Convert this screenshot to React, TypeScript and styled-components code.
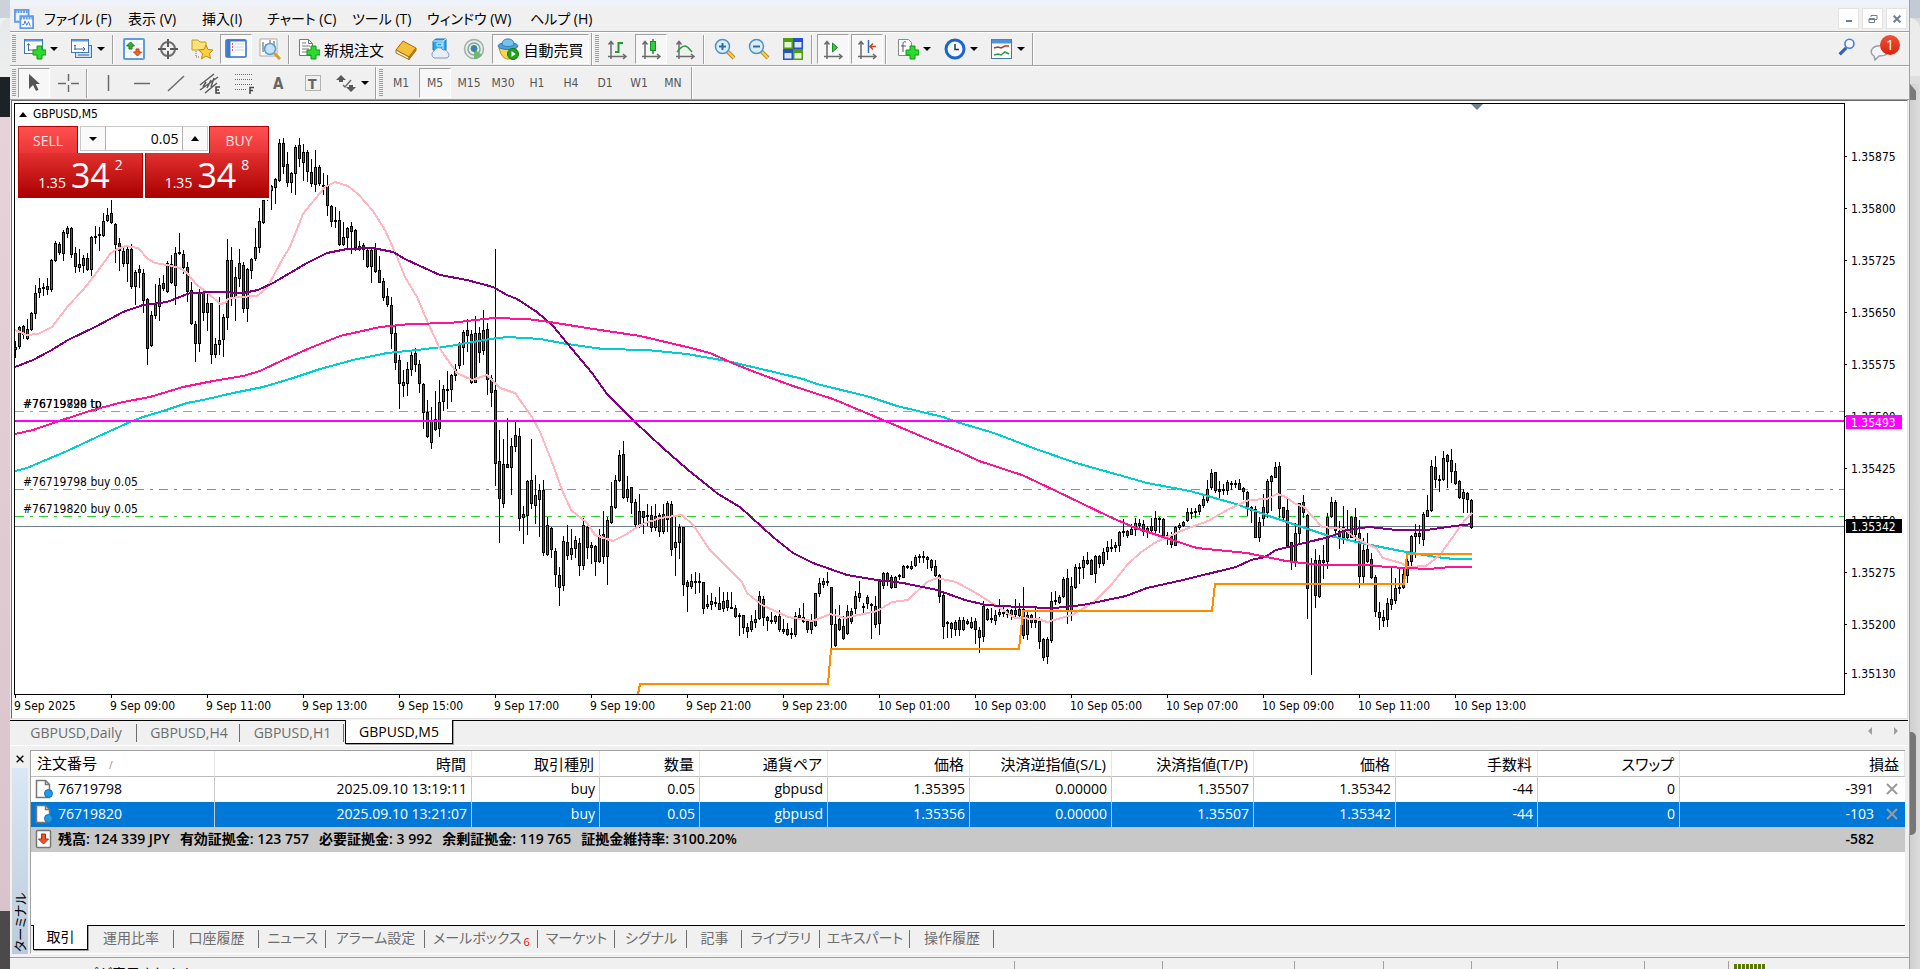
import React from "react";
import styled, { createGlobalStyle, css } from "styled-components";

const UI_FONT = '"Open Sans", "Noto Sans CJK JP", sans-serif';
const CHART_FONT = '"DejaVu Sans Condensed", "Noto Sans", sans-serif';

const GlobalStyle = createGlobalStyle`
  * { box-sizing: border-box; }
  html, body, #root { margin: 0; height: 100%; }
  body {
    overflow: hidden;
    background: #f0f0f0;
    color: #000;
    font-family: ${UI_FONT};
    font-size: 14px;
    font-feature-settings: "palt";
  }
  button, input { font: inherit; font-feature-settings: inherit; color: inherit; margin: 0; }
  button { padding: 0; border: 0; background: none; }
`;

/* ---------- desktop and window frame ---------- */

const Desktop = styled.div`
  display: flex;
  height: 100vh;
`;

const LeftBackdrop = styled.div`
  flex: 0 0 10px;
  display: flex;
  flex-direction: column;
`;

const RightBackdrop = styled.div`
  flex: 0 0 10px;
  display: flex;
  flex-direction: column;
  background: linear-gradient(90deg, #cfcfcf, #dcdcdc);
`;

const Patch = styled.div<{ $h?: number; $bg: string; $radius?: string }>`
  flex: ${(p) => (p.$h ? `0 0 ${p.$h}px` : "1 1 auto")};
  background: ${(p) => p.$bg};
  border-radius: ${(p) => p.$radius ?? "0"};
`;

const Thumb = styled.div`
  width: 6px;
  height: 103px;
  background: #767676;
  border-radius: 0 5px 5px 0;
`;

const ScrollUp = styled.div`
  width: 0;
  height: 16px;
  border-left: 6px solid #7a7a7a;
  border-top: 7px solid transparent;
`;

const Window = styled.main`
  flex: 1 1 auto;
  min-width: 0;
  display: flex;
  flex-direction: column;
  background: #f0f0f0;
  border-right: 1px solid #a0a0a0;
`;

const TitleStrip = styled.div`
  flex: 0 0 6px;
  background: #eef3fb;
`;

/* ---------- menu ---------- */

const MenuBar = styled.nav`
  flex: 0 0 26px;
  display: flex;
  align-items: center;
  padding: 0 2px 0 4px;
  border-bottom: 1px solid #a0a0a0;
`;

const MenuButton = styled.button<{ $w: number }>`
  width: ${(p) => p.$w}px;
  padding-left: 10px;
  text-align: left;
  line-height: 20px;
  white-space: nowrap;
`;

const WindowButtons = styled.div`
  display: flex;
  gap: 3px;
  margin-left: auto;
`;

const WindowButton = styled.button`
  display: grid;
  place-items: center;
  width: 21px;
  height: 21px;
  background: #fff;
  border: 1px solid #e3e3e3;
`;

/* ---------- toolbars ---------- */

const Toolbar = styled.div`
  flex: 0 0 34px;
  display: flex;
  align-items: center;
  gap: 2px;
  padding: 0 2px;
  border-top: 1px solid #fff;
  border-bottom: 1px solid #a0a0a0;
`;

const Grip = styled.span`
  flex: 0 0 4px;
  height: 28px;
  background: repeating-linear-gradient(#9c9c9c 0 1px, #f0f0f0 1px 2px);
`;

const Separator = styled.span`
  flex: 0 0 2px;
  height: 29px;
  margin-right: 2px;
  border-left: 1px solid #a0a0a0;
  border-right: 1px solid #fff;
`;

const BarEnd = styled.span`
  flex: 0 0 2px;
  align-self: stretch;
  border-left: 1px solid #a0a0a0;
  border-right: 1px solid #fff;
`;

const ToolButton = styled.button<{ $w?: number; $pressed?: boolean }>`
  flex: 0 0 ${(p) => p.$w ?? 32}px;
  height: 30px;
  display: flex;
  align-items: center;
  justify-content: center;
  gap: 4px;
  border: 1px solid transparent;
  white-space: nowrap;
  font-size: 15px;
  ${(p) =>
    p.$pressed &&
    css`
      background: #f7f7f7;
      border-color: #a0a0a0 #fff #fff #a0a0a0;
    `}
`;

const TimeframeButton = styled(ToolButton)`
  color: #555;
  font-family: "DejaVu Sans Condensed", sans-serif;
  font-size: 12px;
`;

const CaretMark = styled.span`
  border: 4px solid transparent;
  border-top-color: #000;
  border-bottom: 0;
`;

const RightTools = styled.div`
  display: flex;
  align-items: center;
  margin-left: auto;
  gap: 14px;
  padding-right: 7px;
`;

const ChatButton = styled.button`
  position: relative;
  display: flex;
  align-items: flex-end;
  width: 30px;
  height: 30px;
  padding-bottom: 3px;
`;

const Badge = styled.span`
  position: absolute;
  right: 0;
  top: 1px;
  width: 20px;
  height: 20px;
  border-radius: 50%;
  background: linear-gradient(#ee5238, #d8230c);
  color: #fff;
  font-size: 14px;
  line-height: 20px;
  text-align: center;
`;

/* ---------- chart ---------- */

const ChartFrame = styled.section`
  flex: 1 1 auto;
  min-height: 0;
  display: flex;
  flex-direction: column;
  margin: 0 1px;
  padding: 2px 0 0 2px;
  background: #fff;
  border: 1px solid #e3e3e3;
  border-left-color: #696969;
  border-top-color: #696969;
`;

const ChartBody = styled.div`
  flex: 1 1 auto;
  min-height: 0;
  display: flex;
`;

const Plot = styled.div`
  position: relative;
  flex: 1 1 auto;
  min-width: 0;
  border: 1px solid #000;
  overflow: hidden;
`;

const PlotSvg = styled.svg`
  position: absolute;
  inset: 0;
  width: 100%;
  height: 100%;
  display: block;
`;

const AxisSvg = styled.svg`
  flex: 0 0 62px;
  display: block;
  overflow: hidden;
`;

const TimeAxisSvg = styled.svg`
  flex: 0 0 23px;
  width: 100%;
  display: block;
`;

const ChartTitle = styled.div`
  position: absolute;
  left: 4px;
  top: 2px;
  display: flex;
  align-items: center;
  gap: 6px;
  font-family: ${CHART_FONT};
  font-size: 12px;
  line-height: 16px;
`;

const CollapseMark = styled.span`
  border: 4px solid transparent;
  border-bottom: 5px solid #000;
  border-top: 0;
`;

const TradePanel = styled.div`
  position: absolute;
  left: 2px;
  top: 21px;
  display: grid;
  grid-template-columns: 125px 124px;
  gap: 0 2px;
  padding: 1px 2px 2px 1px;
  background: #fff;
`;

const TradeTop = styled.div`
  grid-column: 1 / -1;
  display: flex;
  justify-content: space-between;
  height: 27px;
`;

const SideButton = styled.button`
  width: 60px;
  background: linear-gradient(#fe5050, #ea3636);
  border: 1px solid #b40000;
  border-bottom: 0;
  color: #ffe1e1;
  font-size: 14px;
  line-height: 25px;
`;

const Stepper = styled.div`
  display: flex;
  height: 25px;
  border: 1px solid #c8c8c8;
`;

const StepButton = styled.button`
  width: 24px;
  display: grid;
  place-items: center;
  background: #fafafa;
`;

const VolumeInput = styled.input`
  width: 78px;
  padding: 0 3px;
  border: 1px solid #b0b0b0;
  border-width: 0 1px;
  background: #fff;
  text-align: right;
  font-size: 14px;
  outline: 0;
`;

const QuoteButton = styled.button`
  height: 45px;
  display: flex;
  justify-content: center;
  align-items: flex-end;
  gap: 5px;
  padding-bottom: 5px;
  background: linear-gradient(#e23030, #ab0000);
  border: 1px solid #b40000;
  color: #fff;
  border-top: 0;
`;

const Small = styled.span`
  font-size: 14px;
  line-height: 18px;
`;
const Large = styled.span`
  font-size: 34px;
  line-height: 34px;
`;
const Pip = styled.span`
  align-self: flex-start;
  font-size: 14px;
  line-height: 24px;
`;

/* ---------- chart tabs ---------- */

const ChartTabs = styled.nav`
  flex: 0 0 26px;
  margin-right: 1px;
  display: flex;
  border-top: 1px solid #000;
  border-bottom: 1px solid #fff;
  margin-top: 1px;
  padding-left: 5px;
`;

const ChartTab = styled.button<{ $w: number; $active?: boolean }>`
  width: ${(p) => p.$w}px;
  color: #6d6d6d;
  border-right: 1px solid transparent;
  background: linear-gradient(#6d6d6d, #6d6d6d) right 3px / 1px 18px no-repeat;
  line-height: 22px;
  ${(p) =>
    p.$active &&
    css`
      height: 24px;
      margin-top: -1px;
      color: #000;
      background: #fff;
      border: 1px solid #000;
      border-top: 0;
      box-shadow: 1px 1px 0 #a0a0a0;
    `}
`;

const TabArrows = styled.div`
  margin-left: auto;
  display: flex;
  gap: 14px;
  padding: 5px 8px 0 0;
  align-items: flex-start;
`;

/* ---------- terminal ---------- */

const Terminal = styled.section`
  flex: 0 0 208px;
  display: flex;
  padding: 4px 4px 0 0;
`;

const TerminalSide = styled.aside`
  flex: 0 0 20px;
  display: flex;
  flex-direction: column;
  align-items: center;
`;

const CloseTerminal = styled.button`
  height: 18px;
  width: 20px;
  display: grid;
  place-items: center;
`;

const SideTitle = styled.div`
  flex: 1 1 auto;
  width: 16px;
  background: linear-gradient(#bccbdb, #dae7f4);
  writing-mode: vertical-rl;
  text-orientation: sideways;
  transform: rotate(180deg);
  font-size: 13px;
  line-height: 16px;
  padding-top: 2px;
`;

const TerminalBody = styled.div`
  flex: 1 1 auto;
  min-width: 0;
  display: flex;
  flex-direction: column;
  border-left: 1px solid #a0a0a0;
  border-top: 1px solid #a0a0a0;
  border-bottom: 1px solid #fff;
`;

const Sheet = styled.div`
  flex: 1 1 auto;
  background: #fff;
  border-bottom: 1px solid #000;
`;

const OrdersTable = styled.table`
  width: 100%;
  border-collapse: separate;
  border-spacing: 0;
  table-layout: fixed;
`;

const HeadCell = styled.th<{ $left?: boolean }>`
  height: 26px;
  padding: 0 ${(p) => (p.$left ? 6 : 5)}px;
  border-right: 1px solid #e5e5e5;
  border-bottom: 1px solid #bdbdbd;
  font-size: 15px;
  font-weight: 400;
  line-height: 20px;
  text-align: ${(p) => (p.$left ? "left" : "right")};
  white-space: nowrap;
`;

const SortMark = styled.span`
  margin-left: 12px;
  color: #888;
  font-size: 10px;
`;

const Row = styled.tr<{ $selected?: boolean }>`
  ${(p) =>
    p.$selected &&
    css`
      background: #0078d7;
      color: #fff;
    `}
`;

const Cell = styled.td`
  height: 25px;
  padding: 0 4px 1px 3px;
  border-right: 1px solid #c8c8c8;
  line-height: 20px;
  text-align: right;
  white-space: nowrap;
  &:last-child {
    padding-right: 5px;
    border-right: 0;
  }
`;

const CellInner = styled.span<{ $end?: boolean }>`
  display: flex;
  align-items: center;
  justify-content: ${(p) => (p.$end ? "flex-end" : "flex-start")};
  gap: ${(p) => (p.$end ? 10 : 4)}px;
`;

const RowClose = styled.button`
  width: 16px;
  height: 16px;
  display: grid;
  place-items: center;
`;

const SummaryCell = styled.td<{ $right?: boolean }>`
  height: 25px;
  padding: 0 ${(p) => (p.$right ? 31 : 4)}px 1px 3px;
  background: #c8c8c8;
  line-height: 20px;
  font-weight: 600;
  text-align: ${(p) => (p.$right ? "right" : "left")};
  white-space: nowrap;
`;

const Figures = styled.span`
  margin-right: 6px;
`;

const TerminalTabs = styled.nav`
  flex: 0 0 27px;
  display: flex;
  align-items: flex-start;
  padding-left: 2px;
`;

const TerminalTab = styled.button<{ $w: number; $active?: boolean }>`
  width: ${(p) => p.$w}px;
  height: 23px;
  color: #6d6d6d;
  line-height: 22px;
  white-space: nowrap;
  background: linear-gradient(#6d6d6d, #6d6d6d) right 4px / 1px 18px no-repeat;
  ${(p) =>
    p.$active &&
    css`
      height: 25px;
      margin-top: -1px;
      color: #000;
      background: #fff;
      border: 1px solid #000;
      border-top: 0;
      box-shadow: 1px 1px 0 #a0a0a0;
    `}
`;

const MailCount = styled.sub`
  color: #f00;
  font-size: 11px;
  line-height: 10px;
  margin-left: 2px;
`;

const StatusBar = styled.footer`
  flex: 0 0 12px;
  display: flex;
  margin-top: 3px;
  padding: 3px 0 0 20px;
  border-top: 1px solid #a0a0a0;
  overflow: hidden;
`;

const StatusText = styled.span`
  flex: 1 1 auto;
  font-size: 14px;
  line-height: 26px;
`;

const StatusField = styled.span<{ $w: number }>`
  flex: 0 0 ${(p) => p.$w}px;
  height: 20px;
  border-left: 1px solid #a0a0a0;
  padding: 3px 0 0 5px;
`;

const Signal = styled.span`
  display: block;
  width: 32px;
  height: 8px;
  background: repeating-linear-gradient(90deg, #5a7a00 0 3px, #f0f0f0 3px 4px);
`;

/* ---------- icons ---------- */

const Icon = ({ children, size = 22 }: { children: React.ReactNode; size?: number }) => (
  <svg width={size} height={size} viewBox="0 0 22 22" fill="none" aria-hidden="true">
    {children}
  </svg>
);

const Plus = () => (
  <path d="M13 8h5v4h4v5h-4v4h-5v-4h-4v-5h4z" fill="#2bdc2b" stroke="#12951a" strokeWidth="1" />
);

const NewChartIcon = () => (
  <Icon>
    <rect x="0.5" y="1.5" width="18" height="14" fill="#fff" stroke="#3f79b0" />
    <path d="M1 2.5h17" stroke="#5b9be0" strokeWidth="2" />
    <path d="M4.500 13V6M3 7.500l1.500-2 1.500 2M4 12h8" stroke="#4a6f98" />
    <Plus />
  </Icon>
);
const ProfilesIcon = () => (
  <Icon>
    <rect x="4.500" y="7.500" width="16" height="12" fill="#cfe2f6" stroke="#3f79b0" />
    <rect x="0.500" y="1.500" width="17" height="13" fill="#fff" stroke="#3f79b0" />
    <path d="M1 2.500h16" stroke="#5b9be0" strokeWidth="2" />
    <path d="M4 7v5M3 11h11M12 9l2 2-2 2M3 8l1-1 1 1M7 17h11" stroke="#3c6899" />
  </Icon>
);
const MarketWatchIcon = () => (
  <Icon>
    <rect x="1" y="1" width="20" height="20" rx="1" fill="#fff" stroke="#5c9fdc" strokeWidth="2" />
    <path d="M2 6h18M2 10h18M2 14h18M8 2v18M14 2v18" stroke="#dbe8f4" />
    <path d="M7.500 4l4 4H9v3H6V8H3.500z" fill="#2fb52f" stroke="#118011" />
    <path d="M14.500 18l-4-4H13v-3h3v3h2.500z" fill="#f0642c" stroke="#c43c10" />
  </Icon>
);
const TargetIcon = () => (
  <Icon>
    <circle cx="11" cy="11" r="7" stroke="#6d6d6d" strokeWidth="2" />
    <path d="M11 1v8M11 13v8M1 11h8M13 11h8" stroke="#5a5a5a" strokeWidth="2" />
  </Icon>
);
const StarIcon = () => (
  <Icon>
    <path d="M1 2h6l2 2h6v8H1z" fill="#fbe27a" stroke="#c29a1a" />
    <path d="M5 13v6h4" stroke="#8a6a10" strokeDasharray="1 1" />
    <path d="M15 7l2 4.500 5 .5-3.500 3.500 1 5-4.500-2.500L10.500 21l1-5L8 12l5-.5z" fill="#fcd03c" stroke="#bf8a10" />
  </Icon>
);
const TerminalIcon = () => (
  <Icon>
    <rect x="1" y="2" width="20" height="17" rx="1" fill="#fff" stroke="#2b6cc0" strokeWidth="1.500" />
    <path d="M3.500 2v17" stroke="#3f79c8" strokeWidth="4" />
    <path d="M2 2.500h18" stroke="#3f79c8" strokeWidth="2" />
    <path d="M7 6h1M7 9h1M7 12h1" stroke="#e02020" strokeWidth="1.500" />
    <path d="M10 6h9M10 9h9M10 12h9" stroke="#c9d3de" />
  </Icon>
);
const TesterIcon = () => (
  <Icon>
    <path d="M1 1h17v17H1z" fill="#fff" stroke="#a9a9a9" />
    <path d="M4 14V4M7 12V6M15 9V3M11 2v4" stroke="#555" />
    <circle cx="11" cy="11" r="5.500" fill="#bfe0fa" fillOpacity="0.9" stroke="#5c9bd4" strokeWidth="1.500" />
    <path d="M15 15l6 6" stroke="#d8a020" strokeWidth="3" />
  </Icon>
);
const NewOrderIcon = () => (
  <Icon>
    <path d="M1.500 1.500h9l4 4v12h-13z" fill="#fff" stroke="#777" />
    <path d="M10.500 1.500v4h4M4 5h4M4 8h8M4 11h7M4 14h5" stroke="#777" />
    <Plus />
  </Icon>
);
const BookIcon = () => (
  <Icon>
    <path d="M1 12L8 3l13 7-7 9z" fill="#f6bf3a" stroke="#a66c0c" />
    <path d="M1 12l13 7v2.500L1 15z" fill="#fff3cf" stroke="#a66c0c" />
    <path d="M14 19l7-9v2.500l-7 9z" fill="#c98413" stroke="#a66c0c" />
  </Icon>
);
const CloudIcon = () => (
  <Icon>
    <path d="M4 3l3-2h10v11H4z" fill="#29a6ee" stroke="#1577b8" />
    <path d="M4 3h10l3-2M8 5h5v3H8zM14 3v9" stroke="#d6f0ff" />
    <path d="M5 20a4 4 0 010-7 5 5 0 019-1 4.500 4.500 0 015 3 3 3 0 01-1 5z" fill="#e8eef7" stroke="#7f96b8" />
  </Icon>
);
const SignalIcon = () => (
  <Icon>
    <circle cx="11" cy="11" r="9.500" fill="#e4ece6" stroke="#a3afa9" strokeWidth="1.500" />
    <circle cx="11" cy="11" r="6" stroke="#8aa5a5" strokeWidth="1.500" />
    <path d="M11 11v10a10 10 0 008-4z" fill="#6fb573" />
    <circle cx="11" cy="10.500" r="3" fill="#3d78d8" stroke="#2f9e44" />
  </Icon>
);
const AutoTradeIcon = () => (
  <Icon>
    <path d="M2 10c2 8 5 11 9 11s7-4 8-11z" fill="#f7d257" stroke="#b8901d" />
    <ellipse cx="11" cy="8" rx="10" ry="3.500" fill="#4aa3dc" stroke="#2c7cb4" />
    <path d="M5 7c0-4 2-6 6-6s6 2 6 6c-3 2-9 2-12 0z" fill="#79c2ec" stroke="#2c7cb4" />
    <circle cx="16" cy="16" r="5.500" fill="#1ea51e" stroke="#0d7a10" />
    <path d="M14.500 13v6l4-3z" fill="#fff" />
  </Icon>
);
const Axes = () => (
  <path d="M5 21V4M2.500 6.500L5 3.500l2.500 3M2 18.500h18M17 16l3 2.500-3 2.500" stroke="#6b6b6b" strokeWidth="1.500" />
);
const BarsIcon = () => (
  <Icon>
    <Axes />
    <path d="M12.500 4v11M9 14h3M13 5h4" stroke="#1f9a2c" strokeWidth="2" />
  </Icon>
);
const CandlesIcon = () => (
  <Icon>
    <Axes />
    <path d="M13 1v15" stroke="#1f8a2c" strokeWidth="1.500" />
    <rect x="10.500" y="3.500" width="5" height="9" fill="#32cf3c" stroke="#1f8a2c" />
  </Icon>
);
const LineIcon = () => (
  <Icon>
    <Axes />
    <path d="M3 14c3-4 5-6 8-6s4 3 7 6" stroke="#2c9a3c" strokeWidth="1.500" />
  </Icon>
);
const Magnifier = ({ minus }: { minus?: boolean }) => (
  <Icon>
    <path d="M13 13l7 7" stroke="#c08a18" strokeWidth="4" />
    <path d="M13 13l7 7" stroke="#f4d056" strokeWidth="2" />
    <circle cx="8.500" cy="8.500" r="7" fill="#d8edfb" stroke="#4d8fc4" strokeWidth="1.500" />
    <path d={minus ? "M5 8.500h7" : "M5 8.500h7M8.500 5v7"} stroke="#2f6ea8" strokeWidth="2" />
  </Icon>
);
const TileIcon = () => (
  <Icon>
    <path d="M1 0h10v11H1zM11 11h10v11H11z" fill="#4f9e12" />
    <path d="M11 0h10v11H11zM1 11h10v11H1z" fill="#2450cc" />
    <path d="M2.500 4h7v5.500h-7zM12.500 15h7v5.500h-7z" fill="#e4f5d6" />
    <path d="M12.500 4h7v5.500h-7zM2.500 15h7v5.500h-7z" fill="#dbe6fc" />
  </Icon>
);
const AutoScrollIcon = () => (
  <Icon>
    <Axes />
    <path d="M10.500 5v9l5-4.500z" fill="#38c838" stroke="#1f8a2c" />
  </Icon>
);
const ShiftIcon = () => (
  <Icon>
    <Axes />
    <path d="M12.500 2v13" stroke="#2f6eb0" strokeWidth="1.500" />
    <path d="M20 8.500h-6M17 5.500l-3 3 3 3" stroke="#c8441a" strokeWidth="1.500" />
  </Icon>
);
const IndicatorsIcon = () => (
  <Icon>
    <path d="M1.500 1.500h10l3 3v13h-13z" fill="#fff" stroke="#888" />
    <path d="M9 4c-3-1-3 1-3 3v7M4 8h5" stroke="#555" />
    <Plus />
  </Icon>
);
const ClockIcon = () => (
  <Icon>
    <circle cx="11" cy="11" r="9" fill="#f4f9ff" stroke="#1a66c8" strokeWidth="3" />
    <path d="M11 6v5.500h4" stroke="#333" strokeWidth="1.500" />
  </Icon>
);
const TemplateIcon = () => (
  <Icon>
    <rect x="0.500" y="1.500" width="20" height="19" fill="#fff" stroke="#3f79b0" />
    <path d="M1 3.500h19" stroke="#4f93de" strokeWidth="4" />
    <path d="M3 10l4-1 3 1 4-2h4" stroke="#b03a1c" strokeWidth="1.500" />
    <path d="M3 17l4-1 3 1 4-3 4 2" stroke="#2c9a3c" strokeWidth="1.500" />
  </Icon>
);
const CursorIcon = () => (
  <Icon>
    <path d="M6 2v15l4-4 3 6 2.500-1.200L12.700 12H17z" fill="#555" />
  </Icon>
);
const CrossIcon = () => (
  <Icon>
    <path d="M11.500 2v7M11.500 13v7M1 11.500h8M14 11.500h8" stroke="#6b6b6b" strokeWidth="1.500" />
  </Icon>
);
const VLineIcon = () => (
  <Icon>
    <path d="M11.500 3v16" stroke="#6b6b6b" strokeWidth="1.500" />
  </Icon>
);
const HLineIcon = () => (
  <Icon>
    <path d="M3 11.500h16" stroke="#6b6b6b" strokeWidth="1.500" />
  </Icon>
);
const TrendIcon = () => (
  <Icon>
    <path d="M3 19L19 4" stroke="#6b6b6b" strokeWidth="1.500" />
  </Icon>
);
const ChannelIcon = () => (
  <Icon>
    <path d="M1 13L15 2M1 18L19 5M6 21L18 11M4 15l3-5M8 16l4-8M12 15l3-9" stroke="#5a5a5a" strokeWidth="1.500" />
    <path d="M21 15h-4v6h4M17 18h3" stroke="#444" strokeWidth="1.500" />
  </Icon>
);
const FiboIcon = () => (
  <Icon>
    <path d="M2 2.500h18M2 7.500h18M2 12.500h18M2 17.500h12" stroke="#6b6b6b" strokeDasharray="1 1" />
    <path d="M21 15.500h-4V22M17 18.500h3" stroke="#444" strokeWidth="1.500" />
  </Icon>
);
const LetterAIcon = () => (
  <Icon>
    <text x="6" y="17" fontFamily="DejaVu Sans Condensed" fontWeight="700" fontSize="15" fill="#666">
      A
    </text>
  </Icon>
);
const LabelIcon = () => (
  <Icon>
    <rect x="4.500" y="3.500" width="15" height="15" stroke="#777" strokeDasharray="1 1" />
    <text x="7" y="17" fontFamily="DejaVu Sans Condensed" fontWeight="700" fontSize="14" fill="#666">
      T
    </text>
  </Icon>
);
const ArrowsIcon = () => (
  <Icon>
    <path d="M6 3l5 5H8v2H4V8H1zM16 20l-5-5h3v-2h4v2h3z" fill="#5a5a5a" />
    <path d="M8 13l2 2 6-7" stroke="#6b6b6b" strokeWidth="1.500" />
  </Icon>
);
const AppIcon = () => (
  <Icon size={20}>
    <path d="M1 1h15v13H1z" fill="#e9f2fc" stroke="#5f9cf0" strokeWidth="2" />
    <path d="M7 8h14v13H7z" fill="#fff" stroke="#5f9cf0" strokeWidth="2" />
    <path d="M1 3h15M7 10h14" stroke="#5f9cf0" strokeWidth="3" strokeDasharray="2 1" />
    <path d="M9 17h2l1-4 2 5 2-4 2 5" stroke="#3d76c8" strokeWidth="1" />
  </Icon>
);
const SearchIcon = () => (
  <Icon size={18}>
    <path d="M2 20l8-8" stroke="#3560c0" strokeWidth="4" />
    <circle cx="14" cy="7" r="5.500" fill="#f6f9ff" stroke="#4a7fd8" strokeWidth="2" />
  </Icon>
);
const ChatIcon = () => (
  <svg width="24" height="18" viewBox="0 0 24 18" fill="none" aria-hidden="true">
    <path d="M4 13c-3-2-4-5-1-8s13-3 15 1-2 7-9 7l-4 4z" fill="#f2f4f7" stroke="#9aa0a8" strokeWidth="1.500" />
  </svg>
);
const OrderIcon = () => (
  <svg width="20" height="20" viewBox="0 0 20 20" fill="none" aria-hidden="true">
    <path d="M2.500 1.500h9l4 4v13h-13z" fill="#fff" stroke="#777" strokeWidth="1.500" />
    <path d="M11.500 1.500v4h4" stroke="#777" strokeWidth="1.500" />
    <circle cx="14.500" cy="14.500" r="4" fill="#1f9be8" stroke="#1273b5" />
  </svg>
);
const BalanceIcon = () => (
  <svg width="20" height="20" viewBox="0 0 20 20" fill="none" aria-hidden="true">
    <rect x="2.500" y="1.500" width="14" height="17" rx="1" fill="#fff" stroke="#777" strokeWidth="1.500" />
    <path d="M7.500 5h4v5h3l-5 5-5-5h3z" fill="#f0532a" stroke="#b02c0c" />
  </svg>
);
const Cross = ({ size, color, width }: { size: number; color: string; width: number }) => (
  <svg width={size} height={size} viewBox="0 0 12 12" aria-hidden="true">
    <path d="M1 1l10 10M11 1L1 11" stroke={color} strokeWidth={width} />
  </svg>
);

/* ---------- chart data ---------- */

// One entry for each five-minute bar: high, body top, body bottom, low, direction.
const BARS = `
341 347 349 357 d|326 327 346 348 u|325 326 334 338 d|319 329 338 339 u|312 313 329 330 u
285 293 313 318 u|278 288 292 297 u|283 287 288 295 d|278 286 289 294 d|259 260 289 291 u
241 243 260 261 u|242 244 252 254 d|230 232 253 260 u|226 228 233 237 u|227 228 254 257 d
247 253 266 272 d|249 264 267 271 u|255 258 265 272 u|253 258 269 270 d|236 237 269 275 u
226 236 237 243 u|227 234 235 250 d|213 221 235 236 u|208 215 220 221 u|200 213 222 223 d
223 224 244 262 d|238 243 250 270 d|247 251 263 266 d|247 249 263 281 u|244 249 286 288 d
270 272 286 304 u|265 269 272 287 d|269 273 300 312 d|298 299 348 364 d|311 315 345 346 u
284 304 315 318 u|278 285 306 320 u|275 283 288 290 d|261 263 291 292 u|255 264 282 283 d
247 253 285 304 u|233 252 253 254 d|250 254 267 273 d|262 267 291 301 d|282 290 323 324 d
321 324 343 361 d|289 292 343 351 u|288 292 312 320 d|294 303 312 330 u|303 303 354 363 d
338 344 354 357 u|297 340 344 354 u|314 317 339 356 u|239 260 317 329 u|247 260 297 305 d
267 277 297 320 u|249 263 278 286 u|262 265 308 312 d|268 269 308 321 u|258 259 270 278 u
228 247 258 260 u|208 221 247 252 u|200 200 222 223 u|188 190 199 200 u|185 186 190 209 u
178 179 187 203 u|139 143 180 181 u|138 143 166 173 d|152 164 182 186 d|172 173 182 192 u
145 147 173 194 u|138 145 158 166 d|144 152 162 180 u|150 152 171 181 d|159 172 183 186 d
150 167 184 191 u|165 167 183 185 d|173 185 186 194 d|175 186 205 215 d|205 206 221 226 d
207 220 221 227 d|211 220 244 245 d|222 237 244 245 u|227 228 237 247 u|222 226 231 253 d
229 230 247 250 d|241 246 249 250 d|243 245 249 259 d|249 250 266 267 d|248 250 266 282 u
243 249 271 272 d|256 270 282 282 d|278 281 297 300 d|288 296 304 306 d|297 305 333 348 d
324 333 362 369 d|355 360 383 408 d|370 382 385 396 u|362 369 383 395 u|350 355 369 375 u
348 353 364 371 d|360 364 383 392 d|383 384 412 428 d|400 412 436 437 d|407 421 442 448 u
391 419 429 430 d|380 402 428 436 u|385 389 401 410 u|371 389 390 408 d|374 375 389 401 u
364 369 375 380 u|342 344 365 368 u|330 332 347 364 u|319 330 335 351 d|330 334 382 383 d
316 333 382 382 u|327 333 352 362 d|310 330 350 354 u|323 329 379 394 d|375 378 392 406 d
249 390 463 485 d|430 461 498 542 d|439 464 503 507 u|418 464 467 467 d|438 446 467 494 u
422 435 446 451 u|428 436 518 530 d|506 514 517 543 u|480 481 515 534 u|439 480 503 508 d
475 495 505 523 u|484 490 499 536 u|480 490 552 555 d|517 525 554 555 u|527 528 549 557 d
548 551 574 586 d|567 575 587 605 d|536 541 585 590 u|525 542 555 559 d|529 548 554 559 u
536 540 548 557 u|538 543 565 575 d|518 525 565 569 u|525 527 547 558 d|542 545 547 563 u
545 546 561 575 d|529 535 561 562 u|511 534 556 563 d|517 520 556 584 u|482 506 522 523 u
475 480 507 508 u|450 455 480 481 u|441 454 497 498 d|476 489 497 501 u|487 487 502 513 d
499 502 524 527 d|494 511 524 527 u|511 511 517 533 d|504 515 516 525 d|506 515 527 531 d
504 516 527 530 u|513 515 531 536 d|504 514 531 533 u|501 503 519 531 u|501 504 549 555 d
517 542 547 575 u|524 527 542 558 u|527 527 584 595 d|580 582 586 611 d|574 581 586 588 u
572 581 582 593 u|573 581 582 592 d|582 582 608 613 d|595 604 606 608 u|593 601 604 609 u
597 602 603 606 d|587 603 609 609 d|592 601 608 611 u|592 600 607 610 d|592 607 608 608 d
605 608 616 617 d|613 615 616 635 u|615 615 627 633 d|623 627 631 637 d|615 621 629 631 u
610 619 622 627 u|591 596 618 619 u|596 599 617 625 d|616 617 620 630 d|612 620 621 623 u
615 616 621 623 u|610 616 629 631 d|619 629 631 633 d|623 629 634 635 d|628 633 634 638 d
612 616 634 636 u|608 615 617 618 d|603 617 621 622 d|620 621 629 632 d|614 622 629 633 u
593 593 625 626 u|578 583 593 596 u|578 581 584 587 u|572 581 582 585 u|587 587 624 648 d
609 624 645 646 d|605 619 629 630 d|616 626 638 639 d|605 611 633 634 u|608 611 621 623 d
591 596 608 613 u|581 593 597 601 u|603 606 607 612 d|595 597 603 608 d|603 604 605 638 u
596 606 624 627 d|579 581 623 634 u|572 573 585 588 u|572 573 581 585 d|575 577 587 588 d
576 577 587 587 u|574 575 576 579 u|565 566 577 577 u|565 566 567 568 d|561 566 568 569 u
555 557 565 566 u|554 556 557 562 u|551 556 557 562 d|556 557 559 568 d|559 560 567 570 d
560 566 575 576 d|574 575 596 602 d|592 595 626 638 d|621 622 623 637 u|622 623 628 637 d
620 622 629 635 u|617 620 629 635 d|617 620 629 630 u|619 621 623 624 d|617 622 627 628 u
618 621 629 643 d|627 630 637 652 d|601 606 636 641 u|608 609 619 620 d|608 618 619 622 d
610 615 620 624 u|599 612 614 616 u|607 612 613 616 d|609 610 614 617 d|609 610 615 619 u
599 610 614 617 d|603 609 615 617 u|587 609 635 638 d|612 615 634 639 u|614 615 622 627 d
607 620 622 627 d|617 621 641 648 d|638 639 657 660 d|637 639 656 663 u|592 601 640 642 u
591 600 601 604 d|595 597 602 603 u|577 579 596 597 u|569 578 610 623 d|577 586 610 620 u
564 567 587 588 u|563 567 568 583 d|556 560 567 578 u|552 560 563 564 d|559 560 574 574 d
555 556 573 582 u|555 556 563 567 d|548 552 563 565 u|541 547 551 559 u|539 547 548 551 d
542 545 547 551 d|531 532 545 551 u|519 531 532 536 u|530 531 535 537 d|524 529 534 534 u
518 523 529 535 u|519 523 525 529 d|520 524 531 535 d|526 528 531 537 u|518 526 530 531 d
511 518 530 532 u|517 518 519 532 d|518 519 538 539 d|532 535 537 544 u|532 536 544 547 d
526 527 545 545 u|523 525 527 529 u|521 522 525 526 u|508 512 520 521 u|508 512 513 518 d
508 511 512 517 d|504 505 511 514 u|495 499 505 507 u|480 489 500 502 u|469 473 487 489 u
472 472 490 492 d|481 489 491 497 d|484 489 490 494 u|480 482 490 494 u|481 483 484 489 d
480 483 484 487 u|479 483 489 489 d|487 488 491 499 d|491 492 507 515 d|506 507 510 522 d
506 509 537 537 d|517 522 537 541 u|494 507 518 525 u|479 481 512 517 u|475 476 481 510 u
462 467 477 477 u|462 466 508 520 d|507 507 517 521 d|498 510 545 547 d|542 542 561 569 d
523 533 561 566 u|503 503 533 543 u|495 502 512 517 d|514 515 588 618 d|558 563 564 674 u
549 560 595 607 d|555 560 596 597 u|545 560 562 578 d|513 517 561 568 u|497 502 516 517 u
500 502 530 535 d|521 531 536 548 d|506 527 537 543 u|510 529 537 538 d|516 517 537 537 u
508 517 534 542 d|520 533 576 587 d|538 550 576 583 u|533 549 561 562 d|553 559 577 578 d
575 577 611 616 d|602 612 617 629 d|610 617 620 626 d|598 603 619 626 u|568 599 604 609 u
578 588 600 603 u|568 587 588 593 d|568 574 587 588 u|553 561 575 582 u|535 536 561 566 u
524 533 536 557 u|525 533 536 543 d|512 514 539 545 u|495 510 516 516 u|460 466 510 511 u
456 467 479 487 d|475 479 480 491 d|451 458 479 480 u|454 455 461 487 d|449 460 471 482 d
463 471 483 484 d|480 481 497 498 d|489 492 498 512 u|492 493 499 512 d|499 500 527 528 d`
  .trim()
  .split(/[|\n]/)
  .map((row) => {
    const [high, top, bottom, low, dir] = row.split(" ");
    return { high: +high, top: +top, bottom: +bottom, low: +low, up: dir === "u" };
  });

const AVERAGES = [
  {
    color: "#00ced1",
    points:
      "15,471 27,468 67,451 97,437 130,422 143,417 163,411 187,403 203,400 233,393 263,387 290,379 320,369 353,360 387,353 417,350 450,346 490,339 507,337 525,338 540,339 567,344 603,349 647,350 687,354 727,361 757,368 803,379 817,384 870,397 897,406 943,417 960,423 994,433 1033,448 1076,463 1101,470 1126,477 1147,483 1190,491 1236,504 1272,517 1326,535 1361,543 1401,551 1436,557 1454,559 1472,559",
  },
  {
    color: "#ffb6c1",
    points:
      "15,330 27,335 38,334 52,327 68,306 83,290 97,272 110,254 117,249 126,246 138,248 148,259 155,263 167,265 180,268 187,273 197,285 208,293 220,304 225,303 228,299 238,297 257,296 267,288 283,258 290,247 303,214 315,199 325,187 335,182 348,186 358,194 373,211 385,230 395,252 405,277 417,297 428,323 440,349 457,373 472,380 487,375 500,388 515,393 532,417 540,432 552,462 562,490 571,510 587,523 595,535 613,541 627,534 640,525 660,518 682,515 693,525 710,550 742,582 747,593 762,605 788,617 813,621 830,614 845,618 877,611 892,602 908,600 927,582 937,578 956,582 976,593 995,605 1015,618 1038,619 1047,622 1072,615 1094,602 1111,585 1127,565 1140,553 1156,542 1172,535 1186,529 1208,521 1229,509 1249,500 1267,499 1277,494 1286,497 1294,503 1304,507 1322,527 1344,529 1354,537 1365,543 1376,548 1383,558 1401,563 1408,567 1426,566 1440,555 1452,538 1465,520 1472,513",
  },
  {
    color: "#800080",
    points:
      "15,367 33,360 50,351 68,340 97,326 123,312 143,305 167,302 190,293 217,292 243,293 258,290 273,283 290,273 307,263 327,253 347,249 373,248 393,252 405,259 420,266 440,275 467,280 493,287 507,295 517,299 537,312 553,326 567,343 592,373 607,394 635,422 663,448 687,469 718,494 740,507 773,537 793,553 813,563 847,575 877,580 903,583 937,590 965,600 986,605 1019,607 1054,608 1083,605 1126,596 1147,588 1183,580 1236,567 1251,560 1265,557 1276,550 1304,543 1329,537 1347,530 1369,527 1397,530 1427,530 1447,527 1472,524",
  },
  {
    color: "#ff1493",
    points:
      "15,434 33,430 62,420 93,410 123,402 150,397 183,387 213,381 243,376 260,371 283,360 310,348 340,336 380,327 410,324 450,323 493,318 527,319 550,322 587,328 640,336 687,347 710,353 737,365 760,374 793,386 833,399 883,420 923,437 960,452 979,461 1022,475 1054,490 1108,516 1133,527 1169,539 1197,548 1247,553 1286,561 1319,565 1369,565 1386,567 1429,569 1451,567 1472,567",
  },
  {
    color: "#ff8c00",
    points:
      "638,694 640,684 828,684 831,649 1019,649 1023,611 1212,611 1215,584 1404,584 1407,554 1472,554",
  },
];

const ORIGIN_X = 15;
const ORIGIN_Y = 104;
const BAR_STEP = 4;

const LEVELS = [
  { y: 411, color: "#ff69b4" },
  { y: 489, color: "#32cd32" },
  { y: 516, color: "#32cd32" },
];

const LEVEL_LABELS = [
  { y: 408, text: "#76719820 tp" },
  { y: 408, text: "#76719798 tp" },
  { y: 486, text: "#76719798 buy 0.05" },
  { y: 513, text: "#76719820 buy 0.05" },
];

const PRICES: [number, string][] = [
  [156, "1.35875"],
  [208, "1.35800"],
  [260, "1.35725"],
  [312, "1.35650"],
  [364, "1.35575"],
  [416, "1.35500"],
  [468, "1.35425"],
  [520, "1.35350"],
  [572, "1.35275"],
  [624, "1.35200"],
  [673, "1.35130"],
];

const MARKED_PRICES = [
  { y: 415, text: "1.35493", fill: "#ff00ff" },
  { y: 519, text: "1.35342", fill: "#000" },
];

const TIMES = [
  "9 Sep 2025",
  "9 Sep 09:00",
  "9 Sep 11:00",
  "9 Sep 13:00",
  "9 Sep 15:00",
  "9 Sep 17:00",
  "9 Sep 19:00",
  "9 Sep 21:00",
  "9 Sep 23:00",
  "10 Sep 01:00",
  "10 Sep 03:00",
  "10 Sep 05:00",
  "10 Sep 07:00",
  "10 Sep 09:00",
  "10 Sep 11:00",
  "10 Sep 13:00",
];

const Candles = () => (
  <g shapeRendering="crispEdges">
    {BARS.map((bar, i) => {
      const x = ORIGIN_X + i * BAR_STEP;
      return (
        <g key={i}>
          <rect x={x} y={bar.high} width="1" height={bar.low - bar.high + 1} fill="#000" />
          <rect x={x - 1} y={bar.top} width="3" height={Math.max(1, bar.bottom - bar.top + 1)} fill="#000" />
          {bar.bottom - bar.top > 1 && (
            <rect
              x={x}
              y={bar.top + 1}
              width="1"
              height={bar.bottom - bar.top - 1}
              fill={bar.up ? "#4169e1" : "#dc143c"}
            />
          )}
        </g>
      );
    })}
  </g>
);

const PlotDrawing = () => (
  <PlotSvg role="img" aria-label="GBPUSD M5">
    <g transform={`translate(${-ORIGIN_X} ${-ORIGIN_Y})`}>
      <g shapeRendering="crispEdges">
        {LEVELS.map((level) => (
          <line
            key={level.y}
            x1={ORIGIN_X}
            x2="200%"
            y1={level.y + 0.5}
            y2={level.y + 0.5}
            stroke={level.color}
            strokeDasharray="9 6 3 6"
          />
        ))}
        <rect x={ORIGIN_X} y="526" width="200%" height="1" fill="#708090" />
      </g>
      <g fontFamily="DejaVu Sans Condensed" fontSize="12" fill="#000">
        {LEVEL_LABELS.map((label) => (
          <text key={label.text + label.y} x="23" y={label.y}>
            {label.text}
          </text>
        ))}
      </g>
      <Candles />
      <g fill="none" strokeWidth="2" shapeRendering="crispEdges">
        {AVERAGES.map((line) => (
          <polyline key={line.color} points={line.points} stroke={line.color} />
        ))}
      </g>
      <rect x={ORIGIN_X} y="420" width="200%" height="2" fill="#ff00ff" />
      <path d="M1471 104h12l-6 6z" fill="#708090" />
    </g>
  </PlotSvg>
);

const PriceAxis = () => (
  <AxisSvg>
    <g transform={`translate(0 ${1 - ORIGIN_Y})`} fontFamily="DejaVu Sans Condensed" fontSize="12">
      {PRICES.map(([y, text]) => (
        <g key={text}>
          <rect y={y} width="2" height="1" />
          <text x="6" y={y + 5}>
            {text}
          </text>
        </g>
      ))}
      {MARKED_PRICES.map((mark) => (
        <g key={mark.text}>
          <rect x="1" y={mark.y} width="56" height="14" fill={mark.fill} />
          <text x="6" y={mark.y + 12} fill="#fff">
            {mark.text}
          </text>
        </g>
      ))}
    </g>
  </AxisSvg>
);

const TimeAxis = () => (
  <TimeAxisSvg fontFamily="DejaVu Sans Condensed" fontSize="12">
    {TIMES.map((text, i) => (
      <g key={text}>
        <rect x={1 + i * 96} width="1" height="3" />
        <text x={i * 96} y="15">
          {text}
        </text>
      </g>
    ))}
  </TimeAxisSvg>
);

/* ---------- page ---------- */

const MENUS: [string, number][] = [
  ["ファイル (F)", 84],
  ["表示 (V)", 74],
  ["挿入(I)", 65],
  ["チャート (C)", 85],
  ["ツール (T)", 75],
  ["ウィンドウ (W)", 103],
  ["ヘルプ (H)", 80],
];

const TIMEFRAMES = ["M1", "M5", "M15", "M30", "H1", "H4", "D1", "W1", "MN"];

const CHART_TABS: [string, number][] = [
  ["GBPUSD,Daily", 123],
  ["GBPUSD,H4", 103],
  ["GBPUSD,H1", 104],
  ["GBPUSD,M5", 108],
];

const COLUMNS: [string, number | undefined][] = [
  ["注文番号", 184],
  ["時間", 257],
  ["取引種別", 128],
  ["数量", 100],
  ["通貨ペア", 128],
  ["価格", 142],
  ["決済逆指値(S/L)", 142],
  ["決済指値(T/P)", 142],
  ["価格", 142],
  ["手数料", 142],
  ["スワップ", 142],
  ["損益", undefined],
];

const ORDERS = [
  ["76719798", "2025.09.10 13:19:11", "buy", "0.05", "gbpusd", "1.35395", "0.00000", "1.35507", "1.35342", "-44", "0", "-391"],
  ["76719820", "2025.09.10 13:21:07", "buy", "0.05", "gbpusd", "1.35356", "0.00000", "1.35507", "1.35342", "-44", "0", "-103"],
];

const SUMMARY = [
  "残高: 124 339 JPY",
  "有効証拠金: 123 757",
  "必要証拠金: 3 992",
  "余剰証拠金: 119 765",
  "証拠金維持率: 3100.20%",
];

const TERMINAL_TABS: [string, number][] = [
  ["取引", 55],
  ["運用比率", 86],
  ["口座履歴", 85],
  ["ニュース", 67],
  ["アラーム設定", 99],
  ["メールボックス", 113],
  ["マーケット", 77],
  ["シグナル", 72],
  ["記事", 55],
  ["ライブラリ", 78],
  ["エキスパート", 90],
  ["操作履歴", 84],
];

const STATUS_FIELDS = [148, 132, 89, 88, 86, 87, 84];

export default function App() {
  return (
    <Desktop>
      <GlobalStyle />
      <LeftBackdrop>
        <Patch $h={18} $bg="#cbd2da" />
        <Patch $h={59} $bg="linear-gradient(#e6e8ea, #eeeeee)" $radius="10px 0 0 0" />
        <Patch $h={40} $bg="#1d2226" />
        <Patch $bg="linear-gradient(#e6d2d8, #d8c4ca)" />
        <Patch $h={58} $bg="#4b494a" />
      </LeftBackdrop>

      <Window>
        <TitleStrip />
        <MenuBar>
          <AppIcon />
          {MENUS.map(([label, width]) => (
            <MenuButton key={label} $w={width}>
              {label}
            </MenuButton>
          ))}
          <WindowButtons>
            <WindowButton aria-label="最小化">
              <svg width="11" height="10"><rect x="3" y="6" width="6" height="2" fill="#6e7f92" /></svg>
            </WindowButton>
            <WindowButton aria-label="元に戻す">
              <svg width="10" height="10" fill="none" stroke="#6e7f92">
                <path d="M3 3V1.500h6v4H7M3 1.500h6M1 4.500h5.500v4H1zM1 5.500h5.500" />
              </svg>
            </WindowButton>
            <WindowButton aria-label="閉じる">
              <Cross size={8} color="#6e7f92" width={3} />
            </WindowButton>
          </WindowButtons>
        </MenuBar>

        <Toolbar>
          <Grip />
          <ToolButton $w={45} aria-label="新規チャート"><NewChartIcon /><CaretMark /></ToolButton>
          <ToolButton $w={45} aria-label="チャートの組表示"><ProfilesIcon /><CaretMark /></ToolButton>
          <Separator />
          <ToolButton aria-label="気配値表示"><MarketWatchIcon /></ToolButton>
          <ToolButton aria-label="データウィンドウ"><TargetIcon /></ToolButton>
          <ToolButton aria-label="ナビゲーター"><StarIcon /></ToolButton>
          <ToolButton $pressed aria-label="ターミナル"><TerminalIcon /></ToolButton>
          <ToolButton aria-label="ストラテジーテスター"><TesterIcon /></ToolButton>
          <Separator />
          <ToolButton $w={94}><NewOrderIcon />新規注文</ToolButton>
          <ToolButton aria-label="メタエディター"><BookIcon /></ToolButton>
          <ToolButton aria-label="VPS"><CloudIcon /></ToolButton>
          <ToolButton aria-label="シグナル"><SignalIcon /></ToolButton>
          <ToolButton $w={97} $pressed><AutoTradeIcon />自動売買</ToolButton>
          <BarEnd />
          <Grip />
          <ToolButton aria-label="バーチャート"><BarsIcon /></ToolButton>
          <ToolButton $pressed aria-label="ローソク足"><CandlesIcon /></ToolButton>
          <ToolButton aria-label="ラインチャート"><LineIcon /></ToolButton>
          <Separator />
          <ToolButton aria-label="拡大"><Magnifier /></ToolButton>
          <ToolButton aria-label="縮小"><Magnifier minus /></ToolButton>
          <ToolButton aria-label="整列"><TileIcon /></ToolButton>
          <Separator />
          <ToolButton $pressed aria-label="自動スクロール"><AutoScrollIcon /></ToolButton>
          <ToolButton $pressed aria-label="チャートシフト"><ShiftIcon /></ToolButton>
          <Separator />
          <ToolButton $w={45} aria-label="インディケータ"><IndicatorsIcon /><CaretMark /></ToolButton>
          <ToolButton $w={45} aria-label="時間足設定"><ClockIcon /><CaretMark /></ToolButton>
          <ToolButton $w={45} aria-label="定型チャート"><TemplateIcon /><CaretMark /></ToolButton>
          <BarEnd />
          <RightTools>
            <button aria-label="検索"><SearchIcon /></button>
            <ChatButton aria-label="お知らせ">
              <ChatIcon />
              <Badge>1</Badge>
            </ChatButton>
          </RightTools>
        </Toolbar>

        <Toolbar>
          <Grip />
          <ToolButton $pressed aria-label="カーソル"><CursorIcon /></ToolButton>
          <ToolButton aria-label="十字カーソル"><CrossIcon /></ToolButton>
          <Separator />
          <ToolButton aria-label="垂直線"><VLineIcon /></ToolButton>
          <ToolButton aria-label="水平線"><HLineIcon /></ToolButton>
          <ToolButton aria-label="トレンドライン"><TrendIcon /></ToolButton>
          <ToolButton aria-label="チャネル"><ChannelIcon /></ToolButton>
          <ToolButton aria-label="フィボナッチ"><FiboIcon /></ToolButton>
          <ToolButton aria-label="テキスト"><LetterAIcon /></ToolButton>
          <ToolButton aria-label="テキストラベル"><LabelIcon /></ToolButton>
          <ToolButton $w={43} aria-label="矢印"><ArrowsIcon /><CaretMark /></ToolButton>
          <BarEnd />
          <Grip />
          {TIMEFRAMES.map((tf) => (
            <TimeframeButton key={tf} $pressed={tf === "M5"}>
              {tf}
            </TimeframeButton>
          ))}
          <BarEnd />
        </Toolbar>

        <ChartFrame>
          <ChartBody>
            <Plot>
              <PlotDrawing />
              <ChartTitle>
                <CollapseMark />
                GBPUSD,M5
              </ChartTitle>
              <TradePanel>
                <TradeTop>
                  <SideButton>SELL</SideButton>
                  <Stepper>
                    <StepButton aria-label="減らす"><CaretMark /></StepButton>
                    <VolumeInput aria-label="数量" defaultValue="0.05" />
                    <StepButton aria-label="増やす"><CollapseMark /></StepButton>
                  </Stepper>
                  <SideButton>BUY</SideButton>
                </TradeTop>
                <QuoteButton>
                  <Small>1.35</Small>
                  <Large>34</Large>
                  <Pip>2</Pip>
                </QuoteButton>
                <QuoteButton>
                  <Small>1.35</Small>
                  <Large>34</Large>
                  <Pip>8</Pip>
                </QuoteButton>
              </TradePanel>
            </Plot>
            <PriceAxis />
          </ChartBody>
          <TimeAxis />
        </ChartFrame>

        <ChartTabs>
          {CHART_TABS.map(([label, width]) => (
            <ChartTab key={label} $w={width} $active={label === "GBPUSD,M5"}>
              {label}
            </ChartTab>
          ))}
          <TabArrows>
            <svg width="10" height="10"><path d="M6 1v8L2 5z" fill="#a0a0a0" /></svg>
            <svg width="10" height="10"><path d="M4 1v8l4-4z" fill="#a0a0a0" /></svg>
          </TabArrows>
        </ChartTabs>

        <Terminal>
          <TerminalSide>
            <CloseTerminal aria-label="ターミナルを閉じる">
              <Cross size={8} color="#000" width={2} />
            </CloseTerminal>
            <SideTitle>ターミナル</SideTitle>
          </TerminalSide>
          <TerminalBody>
            <Sheet>
              <OrdersTable>
                <colgroup>
                  {COLUMNS.map(([, width], i) => (
                    <col key={i} width={width} />
                  ))}
                </colgroup>
                <thead>
                  <tr>
                    {COLUMNS.map(([label], i) => (
                      <HeadCell key={i} $left={i === 0}>
                        {label}
                        {i === 0 && <SortMark>/</SortMark>}
                      </HeadCell>
                    ))}
                  </tr>
                </thead>
                <tbody>
                  {ORDERS.map((order, r) => (
                    <Row key={order[0]} $selected={r === 1}>
                      {order.map((value, i) => (
                        <Cell key={i}>
                          {i === 0 ? (
                            <CellInner>
                              <OrderIcon />
                              {value}
                            </CellInner>
                          ) : i === order.length - 1 ? (
                            <CellInner $end>
                              {value}
                              <RowClose aria-label="決済">
                                <Cross size={12} color="#9a9a9a" width={2} />
                              </RowClose>
                            </CellInner>
                          ) : (
                            value
                          )}
                        </Cell>
                      ))}
                    </Row>
                  ))}
                  <tr>
                    <SummaryCell colSpan={11}>
                      <CellInner>
                        <BalanceIcon />
                        {SUMMARY.map((item) => (
                          <Figures key={item}>{item}</Figures>
                        ))}
                      </CellInner>
                    </SummaryCell>
                    <SummaryCell $right>-582</SummaryCell>
                  </tr>
                </tbody>
              </OrdersTable>
            </Sheet>
            <TerminalTabs>
              {TERMINAL_TABS.map(([label, width], i) => (
                <TerminalTab key={label} $w={width} $active={i === 0}>
                  {label}
                  {label === "メールボックス" && <MailCount>6</MailCount>}
                </TerminalTab>
              ))}
            </TerminalTabs>
          </TerminalBody>
        </Terminal>

        <StatusBar>
          <StatusText>F1でヘルプが表示されます</StatusText>
          {STATUS_FIELDS.map((width, i) => (
            <StatusField key={i} $w={width} />
          ))}
          <StatusField $w={181}>
            <Signal />
          </StatusField>
        </StatusBar>
      </Window>

      <RightBackdrop>
        <Patch $h={18} $bg="#c3cad6" />
        <Patch $h={58} $bg="#ececec" $radius="0 10px 0 0" />
        <Patch $h={8} $bg="#dedede" />
        <ScrollUp />
        <Patch $h={632} $bg="transparent" />
        <Thumb />
      </RightBackdrop>
    </Desktop>
  );
}
